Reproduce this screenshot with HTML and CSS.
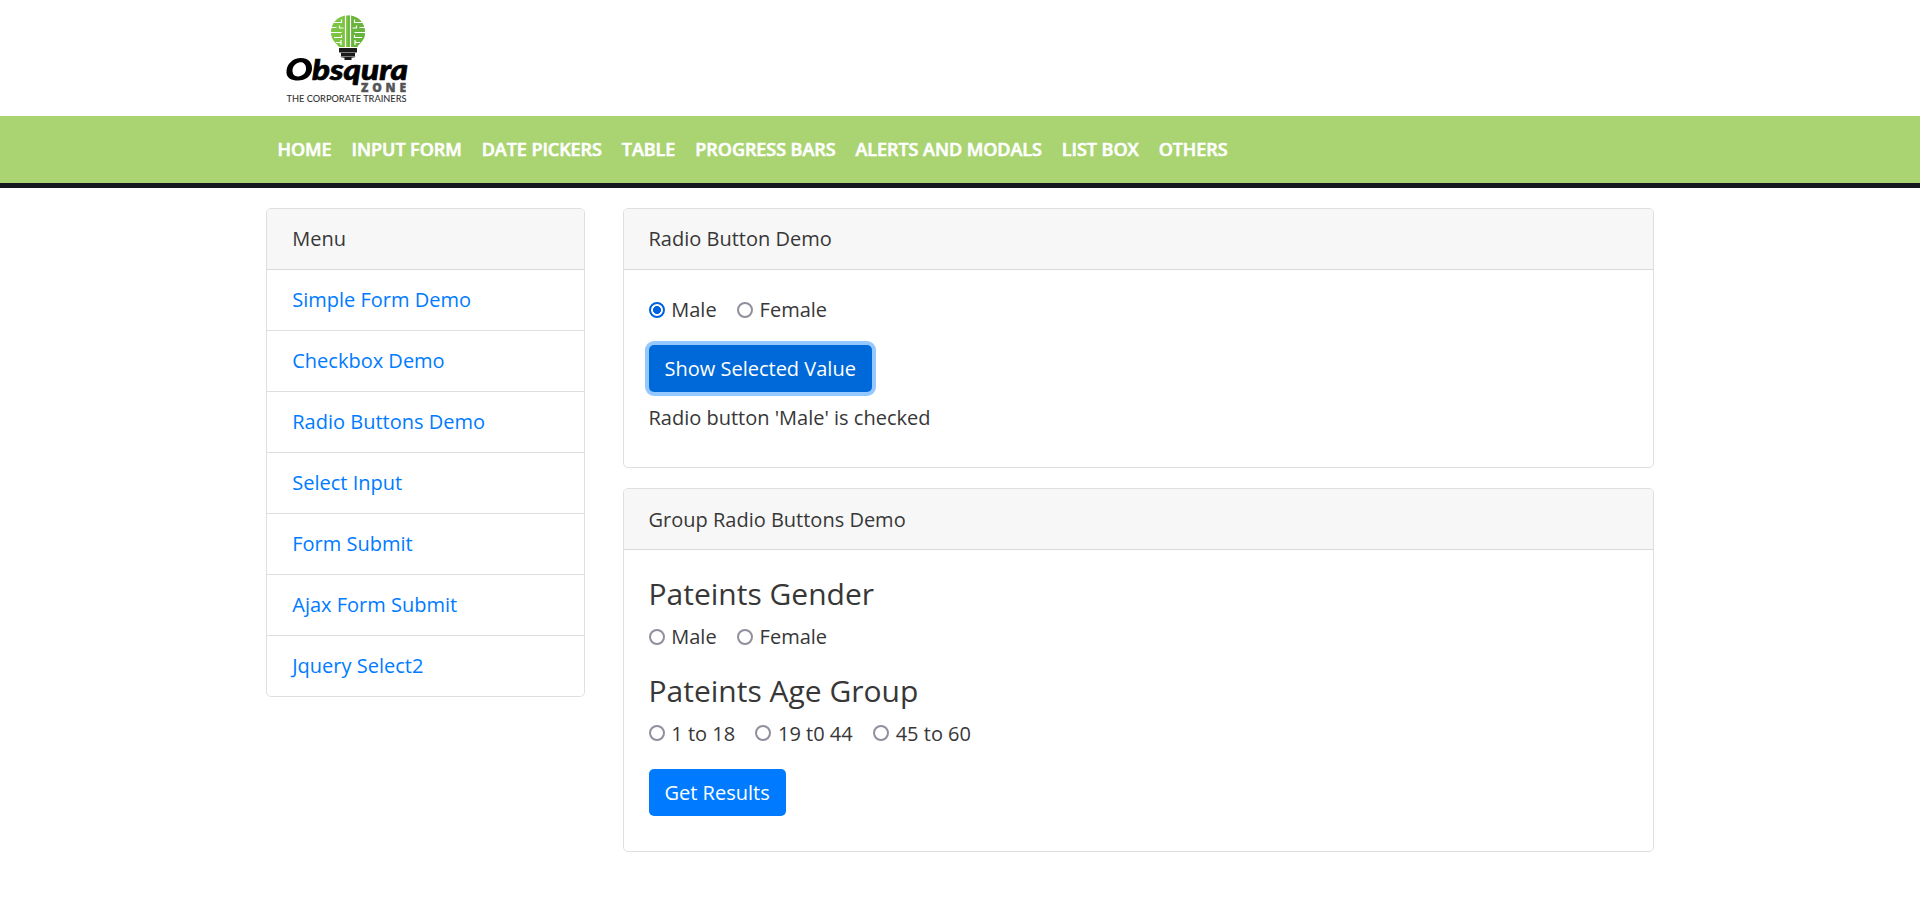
FILE: index.html
```html
<!DOCTYPE html>
<html lang="en">
<head>
<meta charset="utf-8">
<title>Obsqura Zone</title>
<link rel="stylesheet" href="styles.css">
</head>
<body>
<header class="top">
  <div class="container">
    <svg class="logo" width="124" height="90" viewBox="0 0 124 90" role="img" aria-label="Obsqura Zone">
      <path fill="#7cc540" d="M62 0.500C51 .5 45 8.500 45 17.500c0 7.500 5.500 11 8 14.500h18c2.500-3.500 8-7 8-14.500C79 8.500 73 .5 62 .5z"/>
      <path fill="#69b43c" d="M62 .5c11 0 17 8 17 17 0 7.500-5.500 11-8 14.500h-9z"/>
      <g fill="none" stroke="#fff" stroke-width="1.200">
        <path d="M59.500 0v33M64.500 0v33"/>
        <path d="M48 7.500h7.500v-3M45 12.500h5.500M53.500 10.500v2.500h4M45 17.500h10.500M48 22.500h7.500v-2.500M50 27.500h5M55 25v5"/>
        <path d="M76 7.500h-7.500v-3M79 12.500h-5.500M70.500 10.500v2.500h-4M79 17.500H68.500M76 22.500h-7.500v-2.500M74 27.500h-5M69 25v5"/>
      </g>
      <path fill="#1b1b1b" d="M53 33h18v4.500l-2 .7v4l-3.500.6V45h-7v-2.200l-3.500-.6v-4l-2-.7z"/>
      <path d="M53 37.500h18M54.500 41.500h15" stroke="#aaa" stroke-width=".7"/>
      <path fill-rule="evenodd" d="M0.500 58C0 49 7 43 15 43c7 0 11.500 4.500 11 11-.6 7-6.500 11.500-14 11.500C5.500 65.500 .8 63 .5 58zM6.500 56.500c.3 3.800 3 5.500 7 4.700 4.500-1 7-4.500 6.500-8.500-.4-3.900-3.300-6-7-5.200-4.200 1-6.800 4.800-6.500 9z"/>
      <text class="brand" x="26" y="64.500" textLength="96" lengthAdjust="spacingAndGlyphs">bsqura</text>
      <text class="zone" x="75" y="77.300" textLength="45">ZONE</text>
      <text class="tag" x="0.500" y="87" textLength="120" lengthAdjust="spacingAndGlyphs">THE CORPORATE TRAINERS</text>
    </svg>
  </div>
</header>
<nav class="nav">
  <div class="container nav-links">
    <a>HOME</a><a>INPUT FORM</a><a>DATE PICKERS</a><a>TABLE</a><a>PROGRESS BARS</a><a>ALERTS AND MODALS</a><a>LIST BOX</a><a>OTHERS</a>
  </div>
</nav>
<main class="container layout">
  <aside class="card">
    <div class="card-header">Menu</div>
    <ul class="menu">
      <li><a>Simple Form Demo</a></li>
      <li><a>Checkbox Demo</a></li>
      <li><a>Radio Buttons Demo</a></li>
      <li><a>Select Input</a></li>
      <li><a>Form Submit</a></li>
      <li><a>Ajax Form Submit</a></li>
      <li><a>Jquery Select2</a></li>
    </ul>
  </aside>
  <div class="content">
    <section class="card">
      <div class="card-header">Radio Button Demo</div>
      <div class="card-body">
        <div class="radios">
          <label><input type="radio" name="g1" checked>Male</label>
          <label><input type="radio" name="g1">Female</label>
        </div>
        <button class="btn focused">Show Selected Value</button>
        <div class="message">Radio button 'Male' is checked</div>
      </div>
    </section>
    <section class="card">
      <div class="card-header low">Group Radio Buttons Demo</div>
      <div class="card-body">
        <h4>Pateints Gender</h4>
        <div class="radios">
          <label><input type="radio" name="g2">Male</label>
          <label><input type="radio" name="g2">Female</label>
        </div>
        <h4>Pateints Age Group</h4>
        <div class="radios ages">
          <label><input type="radio" name="age">1 to 18</label>
          <label><input type="radio" name="age">19 t0 44</label>
          <label><input type="radio" name="age">45 to 60</label>
        </div>
        <button class="btn">Get Results</button>
      </div>
    </section>
  </div>
</main>
</body>
</html>
```
FILE: styles.css
```css
* { box-sizing: border-box; }
body { margin: 0; background: #fff; color: #373737; font: 20px/30px "Open Sans", sans-serif; }
.container { width: 1425px; margin: 0 auto; padding: 0 18.75px; }
.top { height: 116px; padding-top: 15px; }
.logo { display: block; margin-left: 19.5px; }
.brand { font: italic 900 29px Lato, sans-serif; fill: #000; stroke: #000; stroke-width: .7; }
.zone { font: 900 12px "Open Sans", sans-serif; fill: #555557; stroke: #555557; stroke-width: .4; }
.tag { font: 500 9.5px Lato, sans-serif; fill: #333; }
.nav { height: 72px; background: #a9d471; border-bottom: 5px solid #16161f; }
.nav-links { display: flex; gap: 20px; padding-left: 30px; }
.nav-links a { color: #fff; font-size: 18px; font-weight: 600; line-height: 66px; letter-spacing: -.06px; white-space: nowrap; -webkit-text-stroke: .6px #fff; }
.layout { display: flex; gap: 37.5px; align-items: flex-start; padding-top: 20px; }
.layout > .card { width: 318.75px; }
.content { flex: 1; display: flex; flex-direction: column; gap: 20px; }
.card { border: 1px solid #dfdfdf; border-radius: 5px; overflow: hidden; }
.card-header { height: 61px; padding: 15px 25px; background: #f7f7f7; border-bottom: 1px solid #d9d9d9; }
.card-header.low { padding-top: 16px; }
.menu { list-style: none; margin: 0; padding: 0; }
.menu li { height: 61px; padding: 15px 25px; border-bottom: 1px solid #dfdfdf; }
.menu li:last-child { height: 60px; border-bottom: 0; }
.menu a { color: #007bff; }
.card-body { padding: 25px 25px 35px; }
.radios { display: flex; gap: 20.2px; height: 30px; margin-bottom: 20px; }
.radios label { display: flex; align-items: center; }
.radios input { appearance: none; width: 16px; height: 16px; margin: 0 6.75px 1px 0; border: 2px solid #8f8f9d; border-radius: 50%; background: #fff; }
.ages input { margin-bottom: 2px; }
.radios input:checked { border-color: #0061e0; background: radial-gradient(circle, #0061e0 3.700px, #fff 4.300px); }
.btn { display: block; height: 47px; padding: 0 16px; border: 0; border-radius: 5px; background: #007bff; color: #fff; font: inherit; }
.btn.focused { background: #0069d9; box-shadow: 0 0 0 4px #94c8ff; }
.message { margin: 11px 0 -1px; }
h4 { margin: 0 0 10px; font-size: 30px; font-weight: 400; line-height: 37px; }
```
